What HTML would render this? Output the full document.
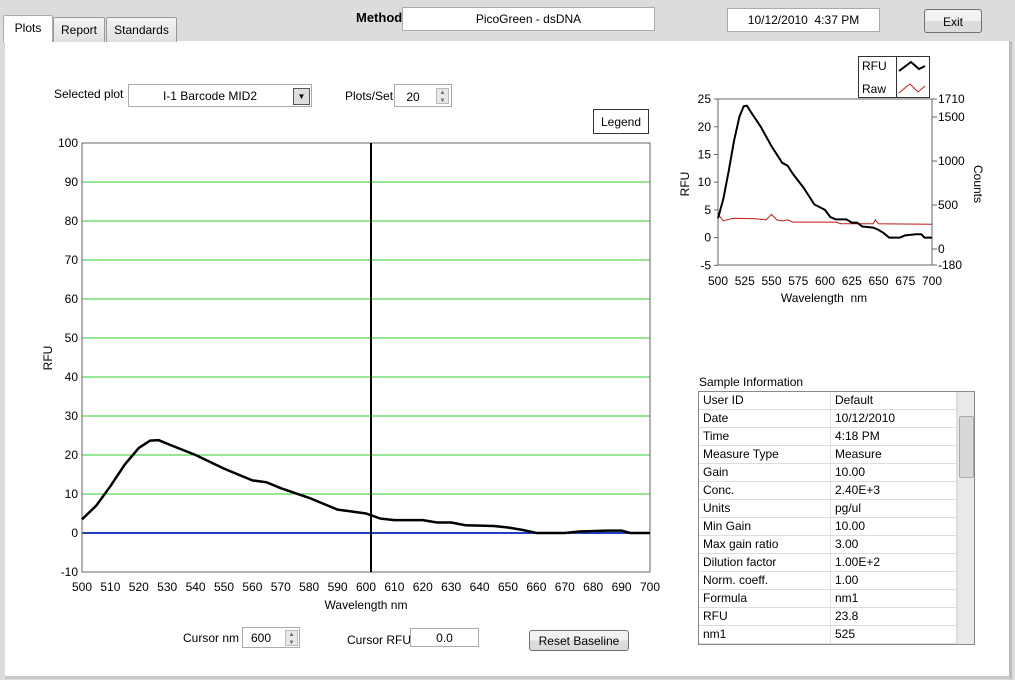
<!DOCTYPE html>
<html><head><meta charset="utf-8"><style>
body{margin:0;width:1015px;height:680px;background:#dcdcdc;font-family:"Liberation Sans",sans-serif;font-size:12px;position:relative;overflow:hidden}
.a{position:absolute}
.box{position:absolute;background:#fff;border:1px solid #aaa;box-sizing:border-box;text-align:center}
.tab{position:absolute;top:17px;height:25px;border:1px solid #999;border-bottom:none;background:linear-gradient(#f4f4f4,#e0e0e0);box-sizing:border-box;padding:5px 0 0;text-align:center;font-size:12px;border-radius:2px 2px 0 0}
.btn{position:absolute;border:1px solid #707070;border-radius:3px;background:linear-gradient(#f2f2f2 50%,#dcdcdc 50%);box-sizing:border-box;text-align:center}
.spin{position:absolute;width:13px;border:1px solid #bbb;background:#e8e8e8;box-sizing:border-box;font-size:6px;line-height:8px;color:#666;text-align:center}
table{border-collapse:collapse}
td{height:17px;line-height:17px;padding:0 0 0 4px;border-bottom:1px solid #ddd;border-right:1px solid #ddd;font-size:12px;white-space:nowrap}
svg text{font-family:"Liberation Sans",sans-serif;font-size:12px}
</style></head><body>
<div class="a" style="left:5px;top:41px;width:1004px;height:635px;background:#fff;border-right:3px solid #bbb;border-bottom:3px solid #c8c8c8"></div>
<div class="tab" style="left:3px;top:15px;width:50px;height:27px;background:#fff;border-color:#aaa">Plots</div>
<div class="tab" style="left:53px;width:52px">Report</div>
<div class="tab" style="left:106px;width:71px">Standards</div>
<div class="a" style="left:356px;top:10px;font-weight:bold;font-size:13px">Method</div>
<div class="box" style="left:402px;top:7px;width:253px;height:24px;padding-top:4px">PicoGreen - dsDNA</div>
<div class="box" style="left:727px;top:8px;width:153px;height:24px;padding-top:4px">10/12/2010&nbsp; 4:37 PM</div>
<div class="btn" style="left:924px;top:9px;width:58px;height:24px;padding-top:5px">Exit</div>

<div class="a" style="left:54px;top:87px">Selected plot</div>
<div class="box" style="left:128px;top:84px;width:184px;height:23px;padding:4px 20px 0 0">I-1 Barcode MID2</div>
<div class="a" style="left:293px;top:88px;width:15px;height:15px;border:1px solid #555;background:#ddd;font-size:8px;text-align:center;line-height:15px">▼</div>
<div class="a" style="left:345px;top:89px">Plots/Set</div>
<div class="box" style="left:394px;top:84px;width:58px;height:23px;padding:5px 20px 0 0">20</div>
<div class="spin" style="left:436px;top:88px;height:16px">▲<br>▼</div>
<div class="box" style="left:593px;top:109px;width:56px;height:25px;border-color:#333;padding-top:5px">Legend</div>

<svg class="a" style="left:0;top:0" width="1015" height="680" id="s">
<g id="g"></g>
</svg>

<div class="a" style="left:183px;top:631px">Cursor nm</div>
<div class="box" style="left:242px;top:627px;width:58px;height:21px;padding:3px 20px 0 0">600</div>
<div class="spin" style="left:285px;top:630px;height:16px">▲<br>▼</div>
<div class="a" style="left:347px;top:633px">Cursor RFU</div>
<div class="box" style="left:410px;top:628px;width:69px;height:19px;padding-top:2px">0.0</div>
<div class="btn" style="left:529px;top:630px;width:100px;height:21px;padding-top:3px">Reset Baseline</div>

<div class="a" style="left:699px;top:375px">Sample Information</div>
<div class="a" style="left:698px;top:391px;width:277px;height:254px;border:1px solid #888;box-sizing:border-box;overflow:hidden;background:#fff">
<table style="width:258px"><tbody id="tb"></tbody></table>
<div class="a" style="left:258px;top:0;width:17px;height:252px;background:#eaeaea;border-left:1px solid #ddd"></div>
<div class="a" style="left:260px;top:24px;width:13px;height:60px;background:#d8d8d8;border:1px solid #aaa;border-radius:2px"></div>
</div>
<script>
var g=document.getElementById('g'),h='';
function L(x1,y1,x2,y2,c,w){h+='<line x1="'+x1+'" y1="'+y1+'" x2="'+x2+'" y2="'+y2+'" stroke="'+c+'" stroke-width="'+(w||1)+'"/>';}
function T(x,y,t,a,extra){h+='<text x="'+x+'" y="'+y+'" text-anchor="'+(a||'middle')+'" '+(extra||'')+'>'+t+'</text>';}
for(var i=0;i<=11;i++){var v=100-i*10,y=143+i*39;
 if(v!=0&&v!=100&&v!=-10)L(82,y,650,y,'#2ecc2e');T(78,y+4,v,'end');}
L(82,533,650,533,'#1f3fbf',2);
h+='<rect x="82" y="143" width="568" height="429" fill="none" stroke="#666"/>';
for(var n=500;n<=700;n+=10){T(82+(n-500)*2.84,591,n);}
T(366,609,'Wavelength nm');T(52,358,'RFU','middle','transform="rotate(-90 52 358)"');
L(371,143,371,572,'#000',2);
var P=[[500,3.5],[505,7],[510,12],[515,17.5],[520,21.8],[524,23.7],[527,23.8],[532,22.3],[540,20],[550,16.5],[560,13.5],[565,13],[570,11.5],[580,9],[590,6],[595,5.5],[600,5],[605,3.7],[610,3.3],[620,3.3],[625,2.7],[630,2.7],[635,2],[645,1.8],[650,1.4],[655,0.8],[660,0],[670,0],[675,0.4],[685,0.6],[690,0.6],[693,0],[700,0]];
h+='<polyline fill="none" stroke="#000" stroke-width="2.5" points="'+P.map(function(p){return (82+(p[0]-500)*2.84)+','+(533-p[1]*3.9)}).join(' ')+'"/>';
var ys=function(r){return 237.6-r*5.54},xs=function(n){return 718+(n-500)*1.07};
h+='<rect x="718" y="99" width="214" height="166" fill="none" stroke="#666"/>';
[25,20,15,10,5,0,-5].forEach(function(r){L(714,ys(r),718,ys(r),'#666');T(711,ys(r)+4,r,'end');});
[[1710,99],[1500,117],[1000,161],[500,205],[0,249],[-180,265]].forEach(function(c){L(932,c[1],937,c[1],'#666');T(938,c[1]+4,c[0],'start');});
for(n=500;n<=700;n+=25)T(xs(n),285,n);
T(824,302,'Wavelength&#160; nm');T(689,184,'RFU','middle','transform="rotate(-90 689 184)"');
T(974,184,'Counts','middle','transform="rotate(90 974 184)"');
var R=[[500,4.2],[505,3],[510,3.3],[515,3.5],[535,3.4],[545,3.2],[550,4.2],[555,3.2],[560,3],[565,3.2],[570,2.8],[590,2.8],[610,2.8],[615,2.5],[645,2.5],[647,3.2],[650,2.5],[700,2.4]];
h+='<polyline fill="none" stroke="#c01818" stroke-width="1" points="'+R.map(function(p){return xs(p[0])+','+ys(p[1])}).join(' ')+'"/>';
h+='<polyline fill="none" stroke="#000" stroke-width="2" points="'+P.map(function(p){return xs(p[0])+','+ys(p[1])}).join(' ')+'"/>';
// legend
h+='<rect x="858.5" y="56.5" width="71" height="41" fill="#fff" stroke="#333"/>';
h+='<rect x="896.5" y="56.5" width="33" height="41" fill="none" stroke="#333"/>';
T(862,70,'RFU','start');T(862,93,'Raw','start');
h+='<polyline fill="none" stroke="#000" stroke-width="2" points="899,71 907,65 911,62 919,69 925,66"/>';
h+='<polyline fill="none" stroke="#c01818" points="899,93 905,88 910,84 918,92 925,86"/>';
g.innerHTML=h;
var rows=[['User ID','Default'],['Date','10/12/2010'],['Time','4:18 PM'],['Measure Type','Measure'],['Gain','10.00'],['Conc.','2.40E+3'],['Units','pg/ul'],['Min Gain','10.00'],['Max gain ratio','3.00'],['Dilution factor','1.00E+2'],['Norm. coeff.','1.00'],['Formula','nm1'],['RFU','23.8'],['nm1','525']];
document.getElementById('tb').innerHTML=rows.map(function(r){return '<tr><td style="width:127px">'+r[0]+'</td><td>'+r[1]+'</td></tr>'}).join('');
</script>
</body></html>
